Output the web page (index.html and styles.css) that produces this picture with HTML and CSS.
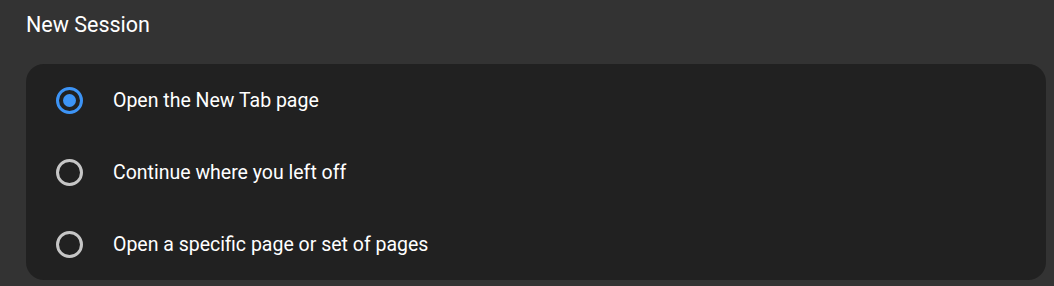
FILE: index.html
```html
<!DOCTYPE html>
<html lang="en">
<head>
  <meta charset="UTF-8">
  <meta name="viewport" content="width=device-width, initial-scale=1.0">
  <title>New Session</title>
  <link rel="stylesheet" href="styles.css">
</head>
<body>
  <div class="page">
    <h2 class="title">New Session</h2>
    <div class="card">
      <label class="row">
        <input type="radio" name="session" checked>
        <span class="radio"></span>
        <span class="text">Open the New Tab page</span>
      </label>
      <label class="row">
        <input type="radio" name="session">
        <span class="radio"></span>
        <span class="text">Continue where you left off</span>
      </label>
      <label class="row">
        <input type="radio" name="session">
        <span class="radio"></span>
        <span class="text">Open a specific page or set of pages</span>
      </label>
    </div>
  </div>
</body>
</html>
```

FILE: styles.css
```css
* {
  margin: 0;
  padding: 0;
  box-sizing: border-box;
}
body {
  background: #333333;
  font-family: Roboto, "Liberation Sans", sans-serif;
  color: #ffffff;
}
.page {
  padding: 0 8px 0 26px;
}
.title {
  margin-top: 12px;
  margin-bottom: 26px;
  font-size: 21.5px;
  line-height: 26px;
  font-weight: 400;
}
.card {
  background: #212121;
  border-radius: 18px;
  padding: 0 30px;
}
.row {
  display: flex;
  align-items: center;
  height: 72px;
  cursor: pointer;
}
.row input {
  display: none;
}
.radio {
  flex: 0 0 27px;
  width: 27px;
  height: 27px;
  border: 3px solid #c6c6c6;
  border-radius: 50%;
  display: flex;
  align-items: center;
  justify-content: center;
}
.row input:checked + .radio {
  border-color: #3d94f6;
}
.row input:checked + .radio::after {
  content: "";
  width: 13px;
  height: 13px;
  border-radius: 50%;
  background: #3d94f6;
}
.text {
  margin-left: 30px;
  font-size: 19.5px;
}
```
